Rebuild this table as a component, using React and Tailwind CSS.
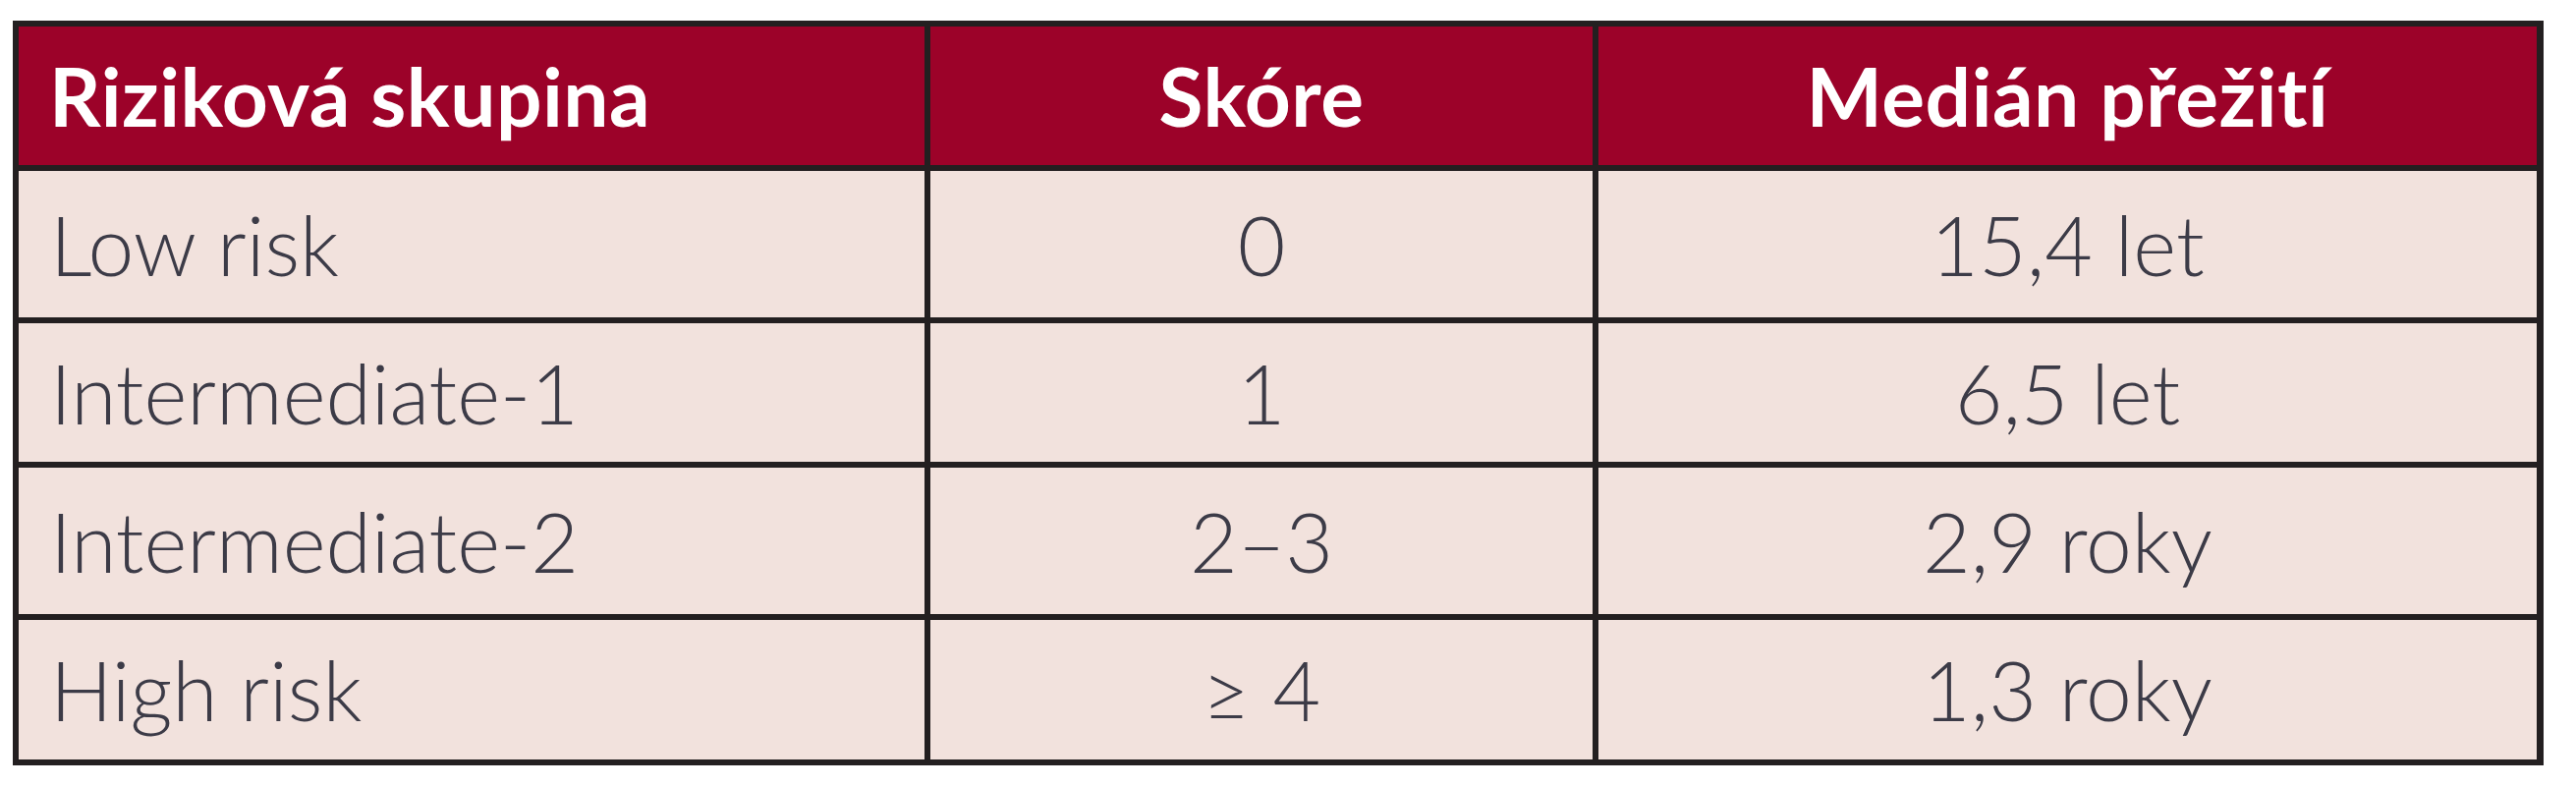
import React from 'react';

const rows = [
  { group: 'Low risk', score: '0', median: '15,4 let', h: 'h-[149px]' },
  { group: 'Intermediate-1', score: '1', median: '6,5 let', h: 'h-[141px]' },
  { group: 'Intermediate-2', score: '2–3', median: '2,9 roky', h: 'h-[149px]' },
  { group: 'High risk', score: '≥ 4', median: '1,3 roky', h: 'h-[142px]' },
];

const App = () => {
  return (
    <div className="min-h-[800px] w-full bg-white pl-[13px] pt-[21px] font-['Lato','Liberation_Sans',sans-serif]">
      {/* Table */}
      <div className="grid w-[2576px] grid-cols-[922px_674px_955px] gap-[6px] bg-[#231f20] p-[6px]">
        {/* Header */}
        <div className="flex h-[141px] items-center bg-[#9c0229] pl-[31px] text-[82px] font-bold tracking-[0.5px] text-white">
          Riziková skupina
        </div>
        <div className="flex h-[141px] items-center justify-center bg-[#9c0229] text-[82px] font-bold tracking-[0.5px] text-white">
          Skóre
        </div>
        <div className="flex h-[141px] items-center justify-center bg-[#9c0229] text-[82px] font-bold tracking-[0.5px] text-white">
          Medián přežití
        </div>

        {/* Body rows */}
        {rows.map((row) => (
          <React.Fragment key={row.group}>
            <div className={`flex ${row.h} items-center bg-[#f2e2dd] pl-[32px] text-[84px] font-light text-[#3c3b47]`}>
              {row.group}
            </div>
            <div className={`flex ${row.h} items-center justify-center bg-[#f2e2dd] text-[84px] font-light text-[#3c3b47]`}>
              {row.score}
            </div>
            <div className={`flex ${row.h} items-center justify-center bg-[#f2e2dd] text-[84px] font-light text-[#3c3b47]`}>
              {row.median}
            </div>
          </React.Fragment>
        ))}
      </div>
    </div>
  );
};

export default App;
